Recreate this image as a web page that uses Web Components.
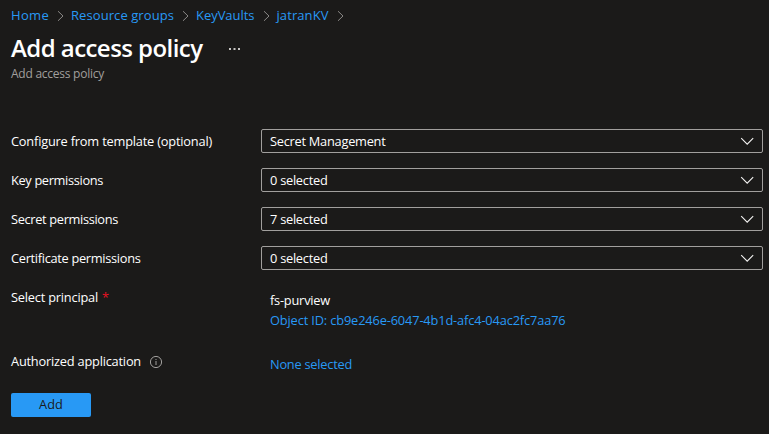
<!DOCTYPE html>
<html lang="en"><head><meta charset="utf-8"><title>Add access policy</title>
<style>html,body{margin:0;background:#1b1a19}body{width:769px;height:434px;overflow:hidden}</style></head><body>
<policy-page></policy-page>
<script>
const define=(name,html,init)=>customElements.define(name,class extends HTMLElement{
  connectedCallback(){
    if(this.shadowRoot)return;
    this.attachShadow({mode:'open'}).innerHTML=html;
    if(init)init(this);
  }
});
// Inline text whose tracking adjusts to the width given in "w".
define('ui-text','<style>:host{display:block;white-space:pre;flex:none}span{display:inline-block}</style><span><slot></slot></span>',el=>{
  const w=+el.getAttribute('w'),s=el.shadowRoot.querySelector('span'),n=el.textContent.length;
  s.style.letterSpacing=(w-s.getBoundingClientRect().width)/n+'px';
  el.style.width=w+'px';
});
define('crumb-chevron','<style>:host{display:block;width:8px;height:12px;flex:none}svg{display:block}</style><svg width="8" height="12" fill="none" stroke="#8a8886" stroke-width="1"><path d="M1 1.2 6 6 1 10.8"/></svg>');
define('crumb-link','<style>:host{display:flex;align-items:center;color:#2899f5;font-size:13px;flex:none}crumb-chevron{margin-left:8px;margin-top:1px}</style><slot></slot><crumb-chevron></crumb-chevron>');
define('crumb-trail','<style>:host{display:flex;height:30px;padding-left:11px;gap:6px}</style><slot></slot>');
define('page-heading',`<style>:host{display:block;padding-left:11px;height:99px}
.row{display:flex;height:35px;align-items:center}.title{font-size:24px;font-weight:600;line-height:35px;color:#fff}
svg{margin:2px 0 0 26.5px}.sub{font-size:12px;line-height:18px;color:#a19f9d}</style>
<div class="row"><ui-text class="title" w="191.5">Add access policy</ui-text><svg width="14" height="4" fill="#c8c6c4"><rect x="0" y="1" width="2" height="2"/><rect x="4.5" y="1" width="2" height="2"/><rect x="9" y="1" width="2" height="2"/></svg></div>
<ui-text class="sub" w="93">Add access policy</ui-text>`);
define('form-row','<style>:host{display:grid;grid-template-columns:250px 502px;padding-left:11px;height:39px;align-items:start}.label{display:flex;height:24px;align-items:center;line-height:24px}</style><div class="label"><slot name="label"></slot></div><slot></slot>');
define('select-box','<style>:host{display:flex;box-sizing:border-box;height:24px;border:1px solid #a19f9d;border-radius:2px;padding:0 8px;align-items:center;justify-content:space-between;line-height:24px}svg{flex:none}</style><slot></slot><svg width="14" height="9" fill="none" stroke="#f3f2f1" stroke-width="1.1"><path d="M1.2 1.2 7.2 7.2l6-6"/></svg>');
define('info-icon','<style>:host{display:block;margin-left:8px;margin-top:2px;height:14px}svg{display:block}</style><svg width="14" height="14" fill="none" stroke="#a19f9d"><circle cx="7" cy="7" r="5.6"/><path d="M7 6v4M7 4v1"/></svg>');
define('primary-button','<style>:host{display:flex;width:80px;height:24px;margin-left:11px;border-radius:2px;background:#2899f5;color:#1b1a19;align-items:center;justify-content:center;line-height:22px}ui-text{line-height:22px}::slotted(*){margin-bottom:2px}</style><slot></slot>');
define('policy-page',`<style>
:host{display:block;width:769px;height:434px;background:#1b1a19;color:#fff;font:12.8px "Open Sans","Noto Sans",sans-serif}
.value{padding-left:9px;line-height:20px;padding-top:5px}.link{color:#2899f5}
.star{color:#e81123;margin-left:4px}.principal{height:64px}.app{height:44px}
</style>
<crumb-trail>
<crumb-link><ui-text w="38">Home</ui-text></crumb-link><crumb-link><ui-text w="103">Resource groups</ui-text></crumb-link><crumb-link><ui-text w="58.5">KeyVaults</ui-text></crumb-link><crumb-link><ui-text w="52">jatranKV</ui-text></crumb-link>
</crumb-trail>
<page-heading></page-heading>
<form-row><ui-text slot="label" w="201">Configure from template (optional)</ui-text><select-box><ui-text w="115.5">Secret Management</ui-text></select-box></form-row>
<form-row><ui-text slot="label" w="92">Key permissions</ui-text><select-box><ui-text w="57.5">0 selected</ui-text></select-box></form-row>
<form-row><ui-text slot="label" w="107">Secret permissions</ui-text><select-box><ui-text w="57.5">7 selected</ui-text></select-box></form-row>
<form-row><ui-text slot="label" w="129.5">Certificate permissions</ui-text><select-box><ui-text w="57.5">0 selected</ui-text></select-box></form-row>
<form-row class="principal"><ui-text slot="label" w="87">Select principal</ui-text><span slot="label" class="star">*</span><div class="value"><ui-text w="60">fs-purview</ui-text><ui-text class="link" w="295.5">Object ID: cb9e246e-6047-4b1d-afc4-04ac2fc7aa76</ui-text></div></form-row>
<form-row class="app"><ui-text slot="label" w="130">Authorized application</ui-text><info-icon slot="label"></info-icon><div class="value"><ui-text class="link" w="82">None selected</ui-text></div></form-row>
<primary-button><ui-text w="24">Add</ui-text></primary-button>`);
</script></body></html>
